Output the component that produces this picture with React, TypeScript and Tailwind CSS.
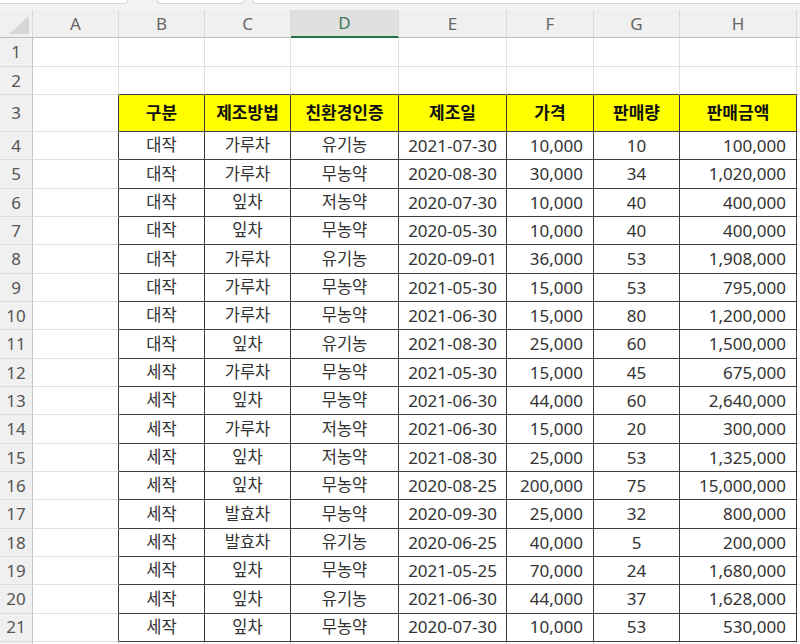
import React from 'react';

const grid = 'grid grid-cols-[33px_86px_86px_86px_108px_108px_87px_86px_117px_1fr]';
const letters = ['A', 'B', 'C', 'D', 'E', 'F', 'G', 'H'];
const heads = ['구분', '제조방법', '친환경인증', '제조일', '가격', '판매량', '판매금액'];

const rows: string[][] = [
    ['대작', '가루차', '유기농', '2021-07-30', '10,000', '10', '100,000'],
    ['대작', '가루차', '무농약', '2020-08-30', '30,000', '34', '1,020,000'],
    ['대작', '잎차', '저농약', '2020-07-30', '10,000', '40', '400,000'],
    ['대작', '잎차', '무농약', '2020-05-30', '10,000', '40', '400,000'],
    ['대작', '가루차', '유기농', '2020-09-01', '36,000', '53', '1,908,000'],
    ['대작', '가루차', '무농약', '2021-05-30', '15,000', '53', '795,000'],
    ['대작', '가루차', '무농약', '2021-06-30', '15,000', '80', '1,200,000'],
    ['대작', '잎차', '유기농', '2021-08-30', '25,000', '60', '1,500,000'],
    ['세작', '가루차', '무농약', '2021-05-30', '15,000', '45', '675,000'],
    ['세작', '잎차', '무농약', '2021-06-30', '44,000', '60', '2,640,000'],
    ['세작', '가루차', '저농약', '2021-06-30', '15,000', '20', '300,000'],
    ['세작', '잎차', '저농약', '2021-08-30', '25,000', '53', '1,325,000'],
    ['세작', '잎차', '무농약', '2020-08-25', '200,000', '75', '15,000,000'],
    ['세작', '발효차', '무농약', '2020-09-30', '25,000', '32', '800,000'],
    ['세작', '발효차', '유기농', '2020-06-25', '40,000', '5', '200,000'],
    ['세작', '잎차', '무농약', '2021-05-25', '70,000', '24', '1,680,000'],
    ['세작', '잎차', '유기농', '2021-06-30', '44,000', '37', '1,628,000'],
    ['세작', '잎차', '무농약', '2020-07-30', '10,000', '53', '530,000'],
];

// alignment per data column (B..H)
const align = [
    'justify-center text-[16.5px]',
    'justify-center text-[16.5px]',
    'justify-center text-[16.5px]',
    'justify-center text-[17px]',
    'justify-end pr-[10px] text-[17px]',
    'justify-center text-[17px]',
    'justify-end pr-[10px] text-[17px]',
];

function RowHead({ n }: { n?: number }) {
    return (
        <div className="flex items-center justify-center bg-[#f0f0f0] border-r border-b border-r-[#c4c4c4] border-b-[#dcdcdc] text-[17px] text-[#555]">
            {n}
        </div>
    );
}

function EmptyRow({ n, h, darkBottom }: { n?: number; h: string; darkBottom?: boolean }) {
    return (
        <div className={`${grid} ${h}`}>
            <RowHead n={n} />
            <div className="border-r border-b border-[#e1e1e1]" />
            {[0, 1, 2, 3, 4, 5, 6].map(i => (
                <div
                    key={i}
                    className={`border-r border-b border-r-[#e1e1e1] ${darkBottom ? 'border-b-[#3c3c3c]' : 'border-b-[#e1e1e1]'}`}
                />
            ))}
            <div className="border-b border-[#e1e1e1]" />
        </div>
    );
}

export default function App() {
    return (
        <div className="w-[800px] h-[644px] overflow-hidden bg-white font-['Noto_Sans','Noto_Sans_CJK_KR',sans-serif]">
            {/* formula bar remains */}
            <div className="flex h-[10px] bg-[#f3f3f3]">
                <div className="w-[128px] h-[4px] bg-white border-b border-r border-[#d4d4d4] rounded-br-[4px]" />
                <div className="ml-[29px] w-[88px] h-[4px] bg-white border-b border-x border-[#d4d4d4] rounded-b-[4px]" />
                <div className="ml-[7px] flex-1 h-[4px] bg-white border-b border-l border-[#d4d4d4] rounded-bl-[4px]" />
            </div>

            {/* column headers */}
            <div className={`${grid} h-[28px] bg-[#f0f0f0]`}>
                <div className="flex items-end justify-end pr-[3px] pb-[3px] border-r border-b border-r-[#dadada] border-b-[#bdbdbd]">
                    <svg width="20" height="18" viewBox="0 0 20 18">
                        <polygon points="20,0 20,18 0,18" fill="#d6d6d6" />
                    </svg>
                </div>
                {letters.map(l =>
                    l === 'D' ? (
                        <div
                            key={l}
                            className="flex items-center justify-center bg-[#e0e0e0] border-r border-r-[#dadada] border-b-2 border-b-[#217346] text-[17px] text-[#3f7a58]"
                        >
                            {l}
                        </div>
                    ) : (
                        <div
                            key={l}
                            className="flex items-center justify-center border-r border-b border-r-[#dadada] border-b-[#bdbdbd] text-[17px] text-[#666]"
                        >
                            {l}
                        </div>
                    )
                )}
                <div className="border-b border-[#bdbdbd]" />
            </div>

            <EmptyRow n={1} h="h-[29px]" />
            <EmptyRow n={2} h="h-[28px]" darkBottom />

            {/* table header */}
            <div className={`${grid} h-[37px]`}>
                <RowHead n={3} />
                <div className="border-r border-b border-r-[#3c3c3c] border-b-[#e1e1e1]" />
                {heads.map(t => (
                    <div
                        key={t}
                        className="flex items-center justify-center bg-[#ffff00] border-r border-b border-[#3c3c3c] text-[17px] font-bold text-[#111]"
                    >
                        {t}
                    </div>
                ))}
                <div className="border-b border-[#e1e1e1]" />
            </div>

            {rows.map((r, i) => (
                <div key={i} className={`${grid} h-[28.33px]`}>
                    <RowHead n={i + 4} />
                    <div className="border-r border-b border-r-[#3c3c3c] border-b-[#e1e1e1]" />
                    {r.map((v, j) => (
                        <div
                            key={j}
                            className={`flex items-center border-r border-b border-[#3c3c3c] text-[#333] ${align[j]}`}
                        >
                            {v}
                        </div>
                    ))}
                    <div className="border-b border-[#e1e1e1]" />
                </div>
            ))}

            {/* row 22: only its top couple of pixels are on screen */}
            <EmptyRow h="h-[28px]" />
        </div>
    );
}
